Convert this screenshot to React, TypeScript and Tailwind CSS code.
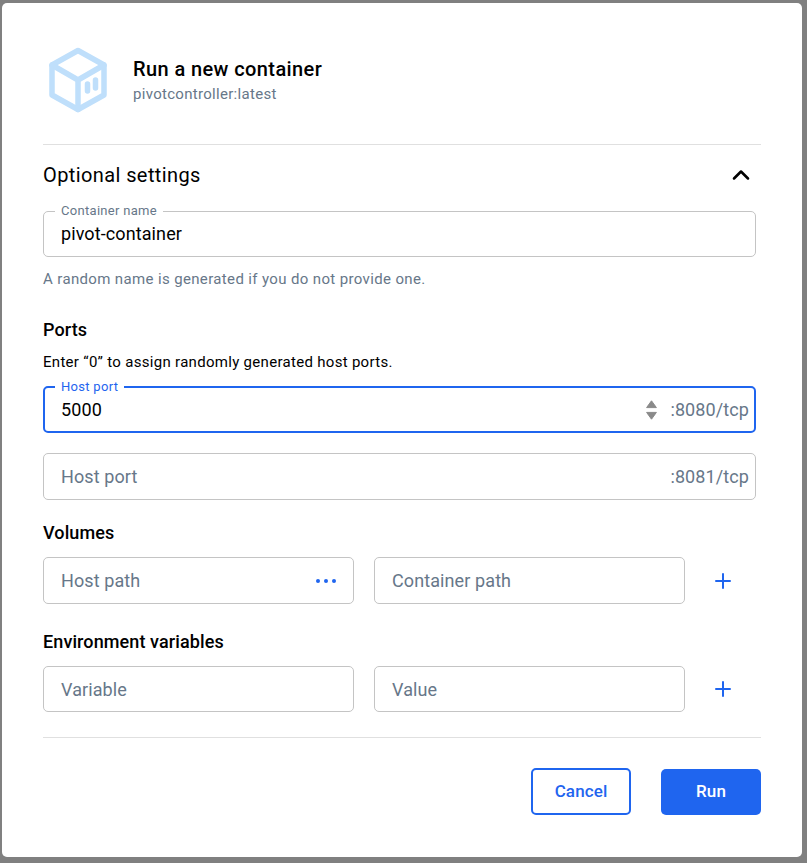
import { ChevronUp, Plus } from "lucide-react";

function Cube() {
  return (
    <svg width="60" height="66" viewBox="0 0 60 66" fill="none" stroke="#bfdffb" strokeWidth="5.5" strokeLinejoin="round" strokeLinecap="round">
      <path d="M30 3.5 L56 18 V48 L30 62.5 L4 48 V18 Z" />
      <path d="M4 18 L30 33 L56 18 M30 33 V62.5" />
      <path d="M39.5 37 V44 M47.5 33 V41" strokeWidth="5.5" />
    </svg>
  );
}

function Field({ placeholder, value, label, suffix, focused, dots, className }: {
  placeholder?: string;
  value?: string;
  label?: string;
  suffix?: string;
  focused?: boolean;
  dots?: boolean;
  className?: string;
}) {
  return (
    <div
      className={`relative flex h-[47px] items-center rounded-[5px] bg-white text-[18px] tracking-[0.1px] ${
        focused ? "border-2 border-[#1f65ef] pl-[16px] pr-[5px]" : "border border-[#c4c4c4] pl-[17px] pr-[6px]"
      } ${className ?? ""}`}
    >
      {label && (
        <span
          className={`absolute top-[-8px] bg-white px-[6px] text-[13px] leading-[14px] tracking-[0.3px] ${
            focused ? "left-[10px] text-[#1f65ef]" : "left-[11px] text-[#677789]"
          }`}
        >
          {label}
        </span>
      )}
      {value ? <span className="flex-1 text-black">{value}</span> : <span className="flex-1 text-[#677789]">{placeholder}</span>}
      {focused && (
        <svg width="11" height="20" viewBox="0 0 11 20" className="mr-[13px]" fill="#8a8a8a" stroke="#8a8a8a" strokeWidth="1" strokeLinejoin="round">
          <path d="M5.5 0.8 L10.4 7.6 H0.6 Z M0.6 12.4 H10.4 L5.5 19.2 Z" />
        </svg>
      )}
      {suffix && <span className="text-[#677789]">{suffix}</span>}
      {dots && (
        <span className="mr-[11px] flex gap-[4px]">
          <span className="h-[4px] w-[4px] rounded-full bg-[#1f65ef]" />
          <span className="h-[4px] w-[4px] rounded-full bg-[#1f65ef]" />
          <span className="h-[4px] w-[4px] rounded-full bg-[#1f65ef]" />
        </span>
      )}
    </div>
  );
}

function PairRow({ left, right, dots, fieldClass }: { left: string; right: string; dots?: boolean; fieldClass?: string }) {
  return (
    <div className="flex items-center">
      <Field placeholder={left} dots={dots} className={`w-[311px] ${fieldClass ?? ""}`} />
      <Field placeholder={right} className={`ml-[20px] w-[311px] ${fieldClass ?? ""}`} />
      <Plus className="ml-[26px] text-[#1f65ef]" size={24} strokeWidth={2} />
    </div>
  );
}

export default function App() {
  return (
    <div className="h-[863px] w-[807px] overflow-hidden bg-[#808080] pl-[2px] pt-[3px] font-['Roboto',sans-serif]">
      <div className="h-[854px] w-[800px] rounded-[5px] bg-white px-[41px]">
        <div className="flex h-[142px] items-start border-b border-[#e0e0e0] pt-[44px]">
          <div className="ml-[5px]">
            <Cube />
          </div>
          <div className="ml-[25px] mt-[9px]">
            <h1 className="text-[20px] font-medium leading-[26px] tracking-[0.4px] text-black">Run a new container</h1>
            <p className="mt-[2px] text-[15px] leading-[20px] tracking-[0.3px] text-[#677789]">pivotcontroller:latest</p>
          </div>
        </div>

        <div className="flex h-[60px] items-center justify-between pr-[6px]">
          <h2 className="text-[20px] leading-[24px] tracking-[0.4px] text-black">Optional settings</h2>
          <ChevronUp size={28} strokeWidth={2.2} className="text-black" />
        </div>

        <div className="w-[713px]">
          <Field label="Container name" value="pivot-container" className="mt-[6px] !h-[46px] pb-[1px]" />
          <p className="mt-[13px] text-[15px] leading-[18px] tracking-[0.36px] text-[#677789]">
            A random name is generated if you do not provide one.
          </p>

          <h3 className="mt-[32px] text-[18px] font-medium leading-[20px] tracking-[0.1px] text-black">Ports</h3>
          <p className="mt-[12px] text-[15px] leading-[20px] tracking-[0.3px] text-black">
            Enter “0” to assign randomly generated host ports.
          </p>
          <Field label="Host port" value="5000" suffix=":8080/tcp" focused className="mt-[14px]" />
          <Field placeholder="Host port" suffix=":8081/tcp" className="mt-[20px]" />

          <h3 className="mt-[23px] text-[18px] font-medium leading-[20px] tracking-[0.1px] text-black">Volumes</h3>
          <div className="mt-[14px]">
            <PairRow left="Host path" right="Container path" dots />
          </div>

          <h3 className="mt-[28px] text-[18px] font-medium leading-[20px] tracking-[0.1px] text-black">Environment variables</h3>
          <div className="mt-[14px]">
            <PairRow left="Variable" right="Value" fieldClass="!h-[46px]" />
          </div>
        </div>

        <div className="mt-[25px] flex h-[78px] items-end justify-end gap-[30px] border-t border-[#e0e0e0]">
          <button className="h-[47px] w-[100px] rounded-[5px] border-2 border-[#1f65ef] bg-white text-[17px] font-medium tracking-[0.1px] text-[#1f65ef]">
            Cancel
          </button>
          <button className="h-[46px] w-[100px] rounded-[5px] bg-[#1f65ef] text-[17px] font-medium tracking-[0.1px] text-white">
            Run
          </button>
        </div>
      </div>
    </div>
  );
}
